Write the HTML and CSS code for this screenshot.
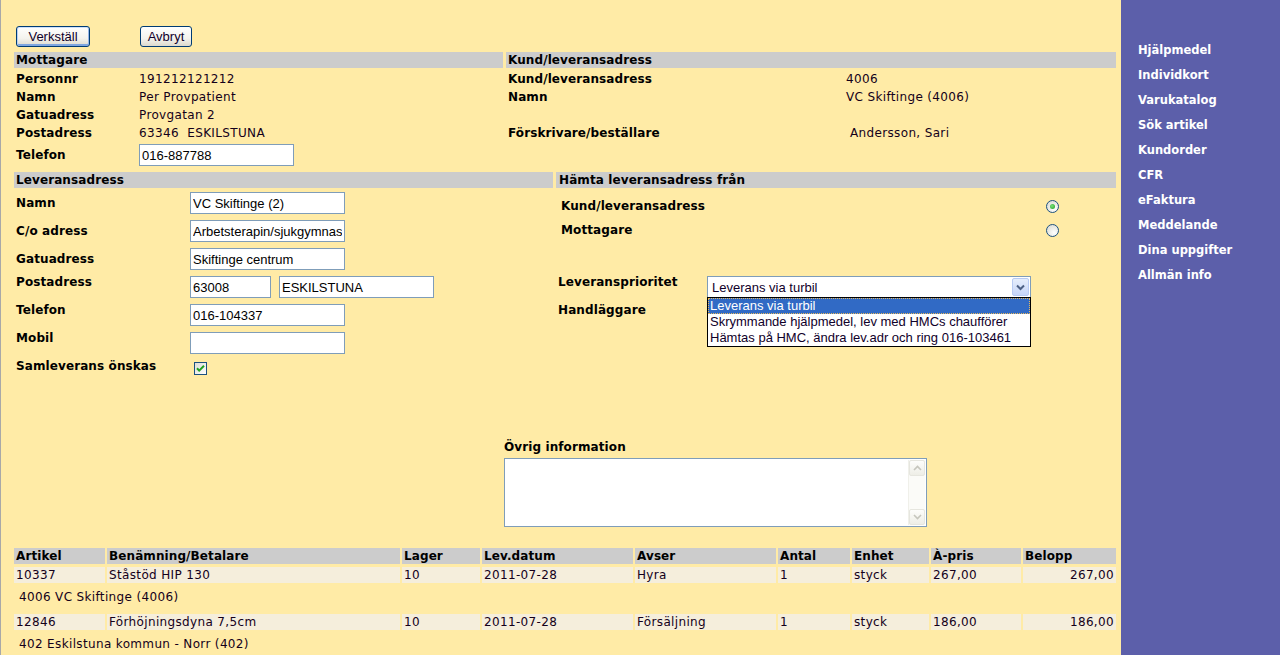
FILE: index.html
```html
<!DOCTYPE html>
<html lang="sv">
<head>
<meta charset="utf-8">
<title>Kundorder</title>
<link rel="stylesheet" href="styles.css">
</head>
<body>
<div class="page">
  <main class="main">
    <div class="actions">
      <button class="btn btn-verk">Verkställ</button>
      <button class="btn btn-avb">Avbryt</button>
    </div>

    <div class="top">
      <section>
        <div class="head">Mottagare</div>
        <div class="kv-list">
          <div class="kv"><span class="lbl">Personnr</span><span class="val">191212121212</span></div>
          <div class="kv"><span class="lbl">Namn</span><span class="val">Per Provpatient</span></div>
          <div class="kv"><span class="lbl">Gatuadress</span><span class="val">Provgatan 2</span></div>
          <div class="kv"><span class="lbl">Postadress</span><span class="val">63346&nbsp; ESKILSTUNA</span></div>
        </div>
        <div class="kv-input"><span class="lbl">Telefon</span><input class="field" type="text" value="016-887788"></div>
      </section>
      <section>
        <div class="head">Kund/leveransadress</div>
        <div class="kv-list">
          <div class="kv kv-wide"><span class="lbl">Kund/leveransadress</span><span class="val">4006</span></div>
          <div class="kv kv-wide"><span class="lbl">Namn</span><span class="val">VC Skiftinge (4006)</span></div>
          <div class="kv kv-wide"><span class="lbl"></span><span class="val"></span></div>
          <div class="kv kv-wide"><span class="lbl">Förskrivare/beställare</span><span class="val val-indent">Andersson, Sari</span></div>
        </div>
      </section>
    </div>

    <div class="deliv">
      <section>
        <div class="head">Leveransadress</div>
        <div class="fields">
          <div class="frow"><span class="lbl">Namn</span><input class="field" type="text" value="VC Skiftinge (2)"></div>
          <div class="frow"><span class="lbl">C/o adress</span><input class="field" type="text" value="Arbetsterapin/sjukgymnastik"></div>
          <div class="frow"><span class="lbl">Gatuadress</span><input class="field" type="text" value="Skiftinge centrum"></div>
          <div class="frow"><span class="lbl lbl-top">Postadress</span><input class="field field-short" type="text" value="63008"><input class="field" type="text" value="ESKILSTUNA"></div>
          <div class="frow"><span class="lbl lbl-top">Telefon</span><input class="field" type="text" value="016-104337"></div>
          <div class="frow"><span class="lbl lbl-top">Mobil</span><input class="field" type="text" value=""></div>
          <div class="frow frow-check"><span class="lbl lbl-top">Samleverans önskas</span>
            <svg class="chk" width="13" height="13" viewBox="0 0 13 13">
              <defs><linearGradient id="cg" x1="0" y1="0" x2="1" y2="1"><stop offset="0" stop-color="#dcdcd6"/><stop offset="1" stop-color="#ffffff"/></linearGradient></defs>
              <rect x="0.5" y="0.5" width="12" height="12" fill="url(#cg)" stroke="#1c5180"/>
              <path d="M3 6.2 L5.2 8.6 L10 3.8" fill="none" stroke="#21a121" stroke-width="2"/>
            </svg>
          </div>
        </div>
      </section>
      <section>
        <div class="head head-pick">Hämta leveransadress från</div>
        <div class="pick">
          <div class="pick-row"><span class="lbl">Kund/leveransadress</span><span class="radio"><span class="dot"></span></span></div>
          <div class="pick-row"><span class="lbl">Mottagare</span><span class="radio"></span></div>
        </div>
        <div class="prio">
          <div class="prow"><span class="lbl">Leveransprioritet</span>
            <div class="select">
              <span class="sel-text">Leverans via turbil</span>
              <span class="sel-btn"><svg width="9" height="7" viewBox="0 0 9 7"><path d="M1 1.5 L4.5 5 L8 1.5" fill="none" stroke="#4d6185" stroke-width="2"/></svg></span>
              <ul class="dropdown">
                <li class="opt opt-on">Leverans via turbil</li>
                <li class="opt">Skrymmande hjälpmedel, lev med HMCs chaufförer</li>
                <li class="opt">Hämtas på HMC, ändra lev.adr och ring 016-103461</li>
              </ul>
            </div>
          </div>
          <div class="prow"><span class="lbl">Handläggare</span></div>
        </div>
      </section>
    </div>

    <div class="other">
      <div class="other-lbl">Övrig information</div>
      <div class="textarea">
        <div class="ta-body"></div>
        <div class="scroll">
          <span class="sb-btn"><svg width="9" height="6" viewBox="0 0 9 6"><path d="M1 5 L4.5 1.5 L8 5" fill="none" stroke="#c6c6bd" stroke-width="1.6"/></svg></span>
          <span class="sb-btn"><svg width="9" height="6" viewBox="0 0 9 6"><path d="M1 1 L4.5 4.5 L8 1" fill="none" stroke="#c6c6bd" stroke-width="1.6"/></svg></span>
        </div>
      </div>
    </div>

    <table class="items">
      <colgroup>
        <col class="c-art"><col class="c-ben"><col class="c-lag"><col class="c-dat"><col class="c-avs"><col class="c-ant"><col class="c-enh"><col class="c-apr"><col class="c-bel">
      </colgroup>
      <thead>
        <tr><th>Artikel</th><th>Benämning/Betalare</th><th>Lager</th><th>Lev.datum</th><th>Avser</th><th>Antal</th><th>Enhet</th><th>À-pris</th><th>Belopp</th></tr>
      </thead>
      <tbody>
        <tr><td>10337</td><td>Ståstöd HIP 130</td><td>10</td><td>2011-07-28</td><td>Hyra</td><td>1</td><td>styck</td><td>267,00</td><td class="num">267,00</td></tr>
        <tr class="sub"><td colspan="9">4006 VC Skiftinge (4006)</td></tr>
        <tr><td>12846</td><td>Förhöjningsdyna 7,5cm</td><td>10</td><td>2011-07-28</td><td>Försäljning</td><td>1</td><td>styck</td><td>186,00</td><td class="num">186,00</td></tr>
        <tr class="sub"><td colspan="9">402 Eskilstuna kommun - Norr (402)</td></tr>
      </tbody>
    </table>
  </main>

  <nav class="sidebar">
    <ul class="nav">
      <li><a href="#">Hjälpmedel</a></li>
      <li><a href="#">Individkort</a></li>
      <li><a href="#">Varukatalog</a></li>
      <li><a href="#">Sök artikel</a></li>
      <li><a href="#">Kundorder</a></li>
      <li><a href="#">CFR</a></li>
      <li><a href="#">eFaktura</a></li>
      <li><a href="#">Meddelande</a></li>
      <li><a href="#">Dina uppgifter</a></li>
      <li><a href="#">Allmän info</a></li>
    </ul>
  </nav>
</div>
</body>
</html>
```
FILE: styles.css
```css
* { box-sizing: border-box; }
html, body { margin: 0; padding: 0; height: 100%; overflow: hidden; }
body {
  font-family: "DejaVu Sans", Verdana, sans-serif;
  font-size: 12px;
  color: #000;
  background: #ffeba6;
}
.page { display: flex; min-height: 100vh; }
.main {
  flex: 0 0 1121px;
  width: 1121px;
  border-left: 1px solid #a8a8a8;
  padding: 26px 5px 0 13px;
  background: #ffeba6;
}
.lbl { font-weight: bold; white-space: nowrap; letter-spacing: 0.1px; }
.val { color: #14001a; white-space: nowrap; letter-spacing: 0.35px; }

/* buttons */
.actions { display: flex; gap: 50px; padding-left: 2px; height: 21px; }
.btn {
  height: 21px;
  padding: 0;
  font: 13px "Liberation Sans", Arial, sans-serif;
  color: #10002a;
  border: 1px solid #003c74;
  border-radius: 3px;
  background: linear-gradient(#ffffff, #f4f3ee 60%, #dcd9cd);
}
.btn-verk { width: 74px; box-shadow: inset 0 1px 0 #cee0fb, inset 1px 0 0 #b8d0f5, inset -1px 0 0 #97b6e8, inset 0 -2px 0 #7fa6e0; }
.btn-avb { width: 52px; }

/* headers */
.head {
  height: 16px;
  line-height: 16px;
  background: #cccccc;
  font-weight: bold;
  padding-left: 2px;
  white-space: nowrap;
  letter-spacing: 0.1px;
}
.head-pick { padding-left: 3px; }

/* top section */
.top { display: grid; grid-template-columns: 489px 610px; column-gap: 3px; margin-top: 5px; }
.kv-list { padding-top: 2px; }
.kv { display: grid; grid-template-columns: 123px 1fr; height: 18px; line-height: 18px; padding-left: 2px; }
.kv-wide { grid-template-columns: 338px 1fr; }
.val-indent { padding-left: 4px; }
.kv-input { display: flex; align-items: center; margin-top: 2px; height: 22px; padding-left: 2px; }
.kv-input .lbl { width: 123px; }

/* inputs */
.field {
  display: block;
  width: 155px;
  height: 22px;
  margin: 0;
  padding: 0 2px;
  border: 1px solid #7f9db9;
  background: #fff;
  font: 13px "Liberation Sans", Arial, sans-serif;
  color: #000;
}
.field-short { width: 81px; margin-right: 8px; }

/* delivery section */
.deliv { display: grid; grid-template-columns: 539px 560px; column-gap: 3px; margin-top: 6px; }
.fields { padding-top: 4px; }
.frow { display: flex; align-items: flex-start; height: 28px; padding-left: 2px; }
.frow .lbl { width: 174px; line-height: 22px; }
.frow .lbl-top { line-height: 13px; }
.frow-check { height: 20px; }
.chk { display: block; margin: 2px 0 0 4px; }

.pick { padding: 6px 57px 0 5px; }
.pick-row { display: flex; justify-content: space-between; align-items: center; height: 24px; }
.radio {
  width: 13px; height: 13px;
  border-radius: 50%;
  border: 1px solid #1c5180;
  background: radial-gradient(circle at 65% 70%, #ffffff 0, #f1f1ec 35%, #d6d6ce 100%);
  display: flex; align-items: center; justify-content: center;
}
.dot { width: 5px; height: 5px; border-radius: 50%; background: radial-gradient(circle at 40% 40%, #7be07b, #1f9e1f); }

.prio { margin-top: 34px; padding-left: 2px; }
.prow { display: flex; align-items: flex-start; height: 28px; }
.prow .lbl { width: 149px; line-height: 13px; }

/* fake select */
.select {
  position: relative;
  width: 324px;
  height: 22px;
  border: 1px solid #7f9db9;
  background: #fff;
  display: flex;
  align-items: center;
  justify-content: space-between;
  font: 13px "Liberation Sans", Arial, sans-serif;
}
.sel-text { padding-left: 4px; color: #10002a; }
.sel-btn {
  width: 17px; height: 18px;
  margin-right: 1px;
  border: 1px solid #b8cbf3;
  border-radius: 2px;
  background: linear-gradient(#e6eefc, #c6d5f8);
  display: flex; align-items: center; justify-content: center;
}
.dropdown {
  position: absolute;
  left: -1px;
  top: 20px;
  width: 324px;
  margin: 0;
  padding: 0;
  list-style: none;
  border: 1px solid #000;
  background: #fff;
  z-index: 2;
}
.opt { height: 16px; line-height: 16px; padding-left: 2px; white-space: nowrap; color: #10002a; }
.opt-on { background: #316ac5; color: #fff; outline: 1px dotted #e7b95d; outline-offset: -1px; }

/* other info */
.other { margin: 59px 0 0 490px; }
.other-lbl { font-weight: bold; line-height: 16px; margin-bottom: 3px; letter-spacing: 0.1px; }
.textarea {
  display: flex;
  width: 423px;
  height: 69px;
  border: 1px solid #7f9db9;
  background: #fff;
}
.ta-body { flex: 1; }
.scroll {
  width: 17px;
  margin: 1px 1px 1px 0;
  background: #fbfbf8;
  border-left: 1px solid #f0f0ea;
  display: flex;
  flex-direction: column;
  justify-content: space-between;
}
.sb-btn {
  height: 16px;
  border: 1px solid #e6e6df;
  border-radius: 2px;
  background: linear-gradient(#fdfdfb, #eeeee7);
  display: flex; align-items: center; justify-content: center;
}

/* items table */
.items {
  width: calc(100% + 4px);
  margin: 18px -2px 0;
  border-collapse: separate;
  border-spacing: 2px 3px;
  table-layout: fixed;
}
.c-art { width: 91px; }
.c-ben { width: 293px; }
.c-lag { width: 78px; }
.c-dat { width: 151px; }
.c-avs { width: 141px; }
.c-ant { width: 72px; }
.c-enh { width: 77px; }
.c-apr { width: 90px; }
.c-bel { width: 93px; }
.items th, .items td {
  height: 16px;
  line-height: 16px;
  padding: 0 2px;
  text-align: left;
  white-space: nowrap;
  overflow: hidden;
}
.items th { background: #cccccc; font-weight: bold; letter-spacing: 0.1px; }
.items td { background: #f5eedc; color: #14001a; letter-spacing: 0.35px; }
.items td.num { text-align: right; }
.items .sub td { background: transparent; height: 25px; padding: 3px 0 6px 5px; vertical-align: top; }

/* sidebar */
.sidebar { flex: 1; background: #5c5faa; padding: 38px 0 0 17px; }
.nav { list-style: none; margin: 0; padding: 0; }
.nav a {
  display: block;
  color: #fff;
  font-weight: bold;
  font-size: 11.5px;
  line-height: 25px;
  text-decoration: none;
  white-space: nowrap;
}
```
